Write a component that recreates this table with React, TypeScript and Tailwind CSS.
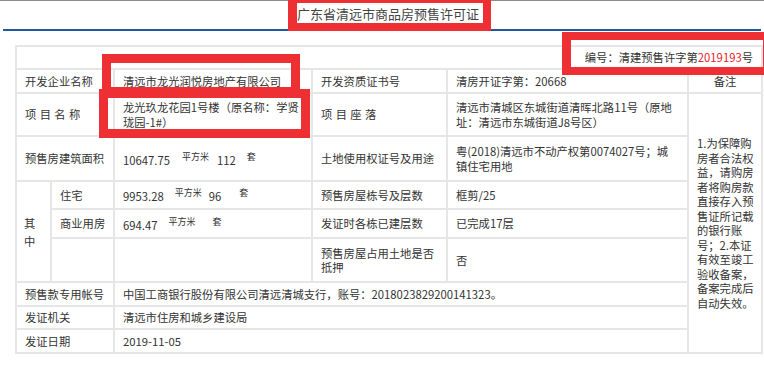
import React from 'react'

const cell = 'border-2 border-[#e6e6e6] px-2 align-middle'

const remark = [
  '1.为保障购',
  '房者合法权',
  '益，请购房',
  '者将购房款',
  '直接存入预',
  '售证所记载',
  '的银行账',
  '号；2.本证',
  '有效至竣工',
  '验收备案，',
  '备案完成后',
  '自动失效。',
]

function Unit({ children, className = '' }: { children: React.ReactNode; className?: string }) {
  return <span className={`text-[9px] align-[5px] ${className}`}>{children}</span>
}

function RedBox({ className }: { className: string }) {
  return <div className={`pointer-events-none absolute border-[#ee3035] ${className}`} />
}

export default function App() {
  return (
    <div className="relative h-[367px] w-[764px] overflow-hidden bg-white font-['Noto_Sans_CJK_SC','Noto_Sans',sans-serif] text-[11.3px] leading-[14.5px] text-[#333]">
      {/* top rule + title */}
      <div className="h-px bg-[#8c8c8c]" />
      <div className="h-[28px] pl-[297px] pt-[3px] text-[13px] leading-[20px] text-[#444]">
        广东省清远市商品房预售许可证
      </div>
      <div className="mx-[3px] h-[2px] bg-[#24569f]" />

      {/* permit table */}
      <table className="ml-[15px] mt-[14px] w-[746px] table-fixed border-collapse border-2 border-[#e6e6e6]">
        <colgroup>
          <col className="w-[35px]" />
          <col className="w-[63px]" />
          <col className="w-[198px]" />
          <col className="w-[135px]" />
          <col className="w-[241px]" />
          <col className="w-[74px]" />
        </colgroup>
        <tbody>
          <tr className="h-[23px]">
            <td colSpan={6} className={`${cell} text-right`}>
              编号：清建预售许字第<span className="text-[#e8202a]">2019193</span>号
            </td>
          </tr>
          <tr className="h-[24px]">
            <td colSpan={2} className={cell}>开发企业名称</td>
            <td className={cell}>清远市龙光润悦房地产有限公司</td>
            <td className={cell}>开发资质证书号</td>
            <td className={cell}>清房开证字第：20668</td>
            <td className={`${cell} text-center`}>备注</td>
          </tr>
          <tr className="h-[43px]">
            <td colSpan={2} className={`${cell} tracking-[0.3em]`}>项目名称</td>
            <td className={cell}>龙光玖龙花园1号楼（原名称：学贤珑园-1#）</td>
            <td className={`${cell} tracking-[0.3em]`}>项目座落</td>
            <td className={cell}>清远市清城区东城街道清晖北路11号（原地址：清远市东城街道J8号区）</td>
            <td rowSpan={9} className={`${cell}`}>
              {remark.map((line) => (
                <div key={line} className="whitespace-nowrap">{line}</div>
              ))}
            </td>
          </tr>
          <tr className="h-[45px]">
            <td colSpan={2} className={cell}>预售房建筑面积</td>
            <td className={`${cell} whitespace-nowrap`}>
              <span>10647.75</span>
              <Unit className="ml-[12px]">平方米</Unit>
              <span className="ml-[8px]">112</span>
              <Unit className="ml-[11px]">套</Unit>
            </td>
            <td className={cell}>土地使用权证号及用途</td>
            <td className={cell}>粤(2018)清远市不动产权第0074027号；城镇住宅用地</td>
          </tr>
          <tr className="h-[28px]">
            <td rowSpan={3} className={`${cell} pl-[7px] pr-0 leading-[18px]`}>
              其<br />中
            </td>
            <td className={`${cell} whitespace-nowrap`}>住宅</td>
            <td className={`${cell} whitespace-nowrap`}>
              <span>9953.28</span>
              <Unit className="ml-[11px]">平方米</Unit>
              <span className="ml-[7px]">96</span>
              <Unit className="ml-[18px]">套</Unit>
            </td>
            <td className={cell}>预售房屋栋号及层数</td>
            <td className={cell}>框剪/25</td>
          </tr>
          <tr className="h-[29px]">
            <td className={`${cell} whitespace-nowrap`}>商业用房</td>
            <td className={`${cell} whitespace-nowrap`}>
              <span>694.47</span>
              <Unit className="ml-[11px]">平方米</Unit>
              <Unit className="ml-[17px]">套</Unit>
            </td>
            <td className={cell}>发证时各栋已建层数</td>
            <td className={cell}>已完成17层</td>
          </tr>
          <tr className="h-[44px]">
            <td className={cell} />
            <td className={cell} />
            <td className={cell}>预售房屋占用土地是否抵押</td>
            <td className={cell}>否</td>
          </tr>
          <tr className="h-[24px]">
            <td colSpan={2} className={cell}>预售款专用帐号</td>
            <td colSpan={3} className={cell}>中国工商银行股份有限公司清远清城支行，账号：2018023829200141323。</td>
          </tr>
          <tr className="h-[23px]">
            <td colSpan={2} className={cell}>发证机关</td>
            <td colSpan={3} className={cell}>清远市住房和城乡建设局</td>
          </tr>
          <tr className="h-[24px]">
            <td colSpan={2} className={cell}>发证日期</td>
            <td colSpan={3} className={cell}>2019-11-05</td>
          </tr>
        </tbody>
      </table>

      {/* red annotation boxes */}
      <RedBox className="left-[288px] top-[-5px] h-[36px] w-[203px] border-[8px] border-l-[9px]" />
      <RedBox className="left-[562px] top-[32px] h-[43px] w-[210px] border-[8px] border-x-[9px]" />
      <RedBox className="left-[102px] top-[54px] h-[42px] w-[198px] border-[9px]" />
      <RedBox className="left-[99px] top-[89px] h-[49px] w-[211px] border-[9px]" />
    </div>
  )
}
